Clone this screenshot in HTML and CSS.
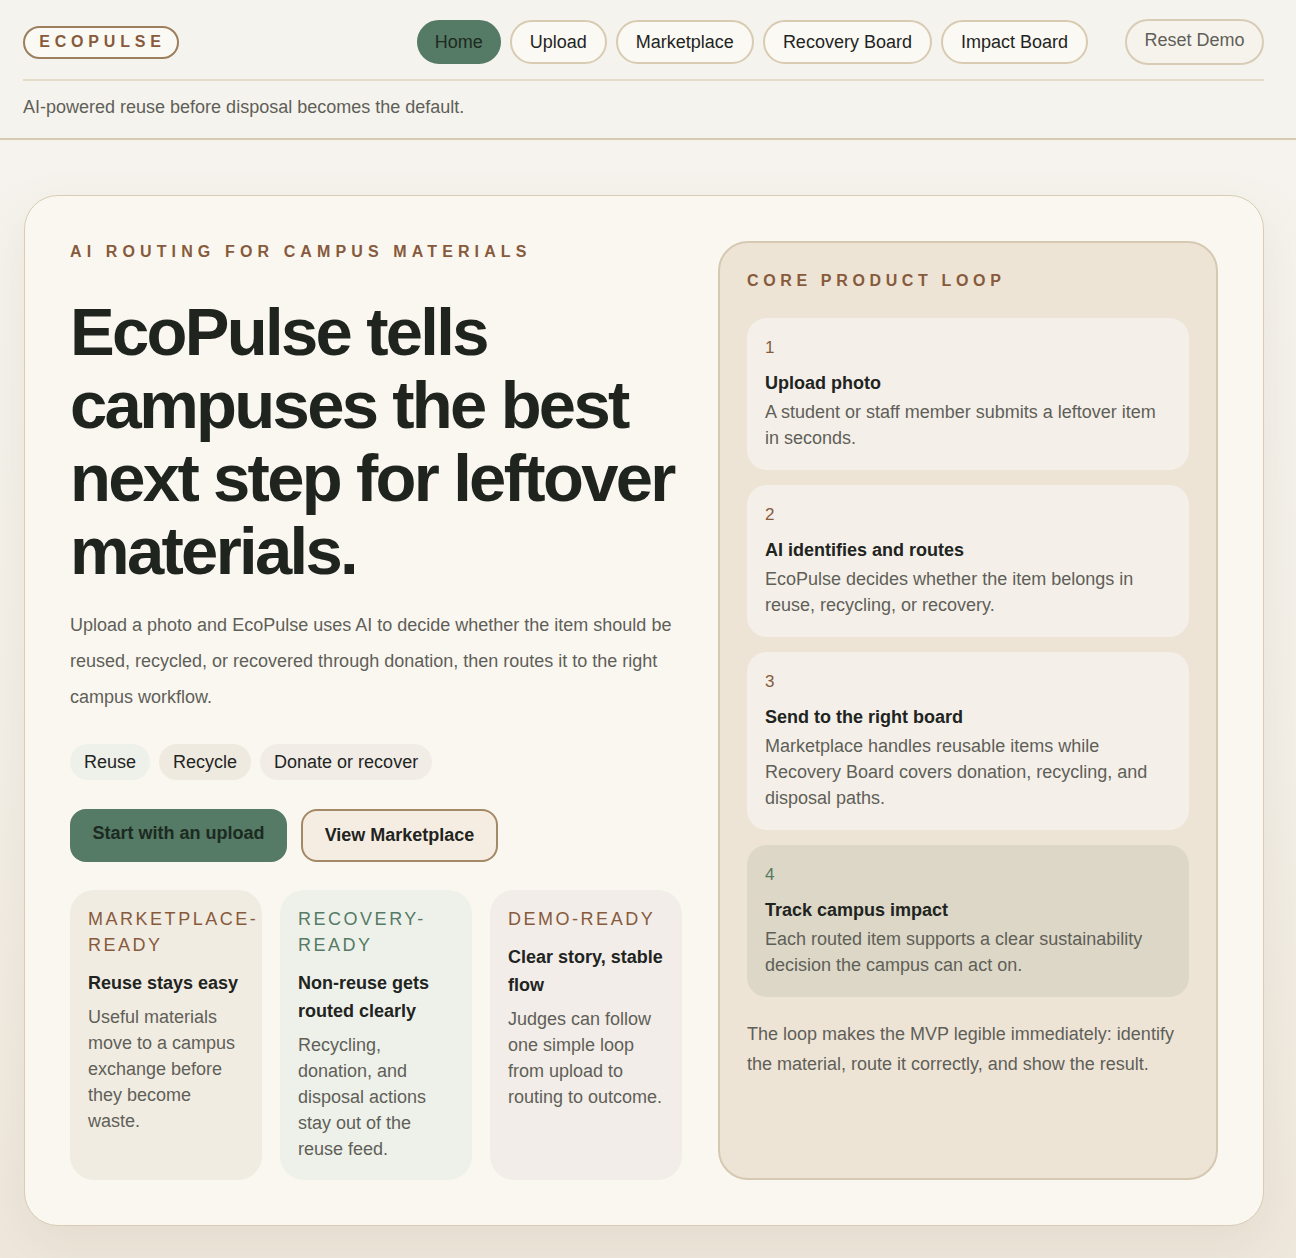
FILE: index.html
```html
<!DOCTYPE html>
<html lang="en">
<head>
<meta charset="utf-8">
<title>EcoPulse</title>
<link rel="stylesheet" href="styles.css">
</head>
<body>
<header class="topbar">
  <div class="topbar-row">
    <div class="logo">ECOPULSE</div>
    <nav class="nav">
      <a class="nav-btn active">Home</a>
      <a class="nav-btn">Upload</a>
      <a class="nav-btn">Marketplace</a>
      <a class="nav-btn">Recovery Board</a>
      <a class="nav-btn">Impact Board</a>
    </nav>
    <button class="reset-btn">Reset Demo</button>
  </div>
  <div class="divider"></div>
  <p class="tagline">AI-powered reuse before disposal becomes the default.</p>
</header>

<main class="page">
  <section class="hero">
    <div class="hero-main">
      <p class="eyebrow">AI ROUTING FOR CAMPUS MATERIALS</p>
      <h1 class="headline">EcoPulse tells campuses the best next step for leftover materials.</h1>
      <p class="lead">Upload a photo and EcoPulse uses AI to decide whether the item should be reused, recycled, or recovered through donation, then routes it to the right campus workflow.</p>
      <div class="chips">
        <span class="chip chip-reuse">Reuse</span>
        <span class="chip chip-recycle">Recycle</span>
        <span class="chip chip-donate">Donate or recover</span>
      </div>
      <div class="actions">
        <a class="btn btn-primary">Start with an upload</a>
        <a class="btn btn-secondary">View Marketplace</a>
      </div>
      <div class="features">
        <article class="feature feature-market">
          <p class="feature-label">MARKETPLACE-READY</p>
          <h3 class="feature-title">Reuse stays easy</h3>
          <p class="feature-body">Useful materials move to a campus exchange before they become waste.</p>
        </article>
        <article class="feature feature-recovery">
          <p class="feature-label">RECOVERY-READY</p>
          <h3 class="feature-title">Non-reuse gets routed clearly</h3>
          <p class="feature-body">Recycling, donation, and disposal actions stay out of the reuse feed.</p>
        </article>
        <article class="feature feature-demo">
          <p class="feature-label">DEMO-READY</p>
          <h3 class="feature-title">Clear story, stable flow</h3>
          <p class="feature-body">Judges can follow one simple loop from upload to routing to outcome.</p>
        </article>
      </div>
    </div>

    <aside class="loop">
      <p class="loop-title">CORE PRODUCT LOOP</p>
      <ol class="steps">
        <li class="step">
          <span class="step-num">1</span>
          <h4 class="step-title">Upload photo</h4>
          <p class="step-desc">A student or staff member submits a leftover item in seconds.</p>
        </li>
        <li class="step">
          <span class="step-num">2</span>
          <h4 class="step-title">AI identifies and routes</h4>
          <p class="step-desc">EcoPulse decides whether the item belongs in reuse, recycling, or recovery.</p>
        </li>
        <li class="step">
          <span class="step-num">3</span>
          <h4 class="step-title">Send to the right board</h4>
          <p class="step-desc">Marketplace handles reusable items while Recovery Board covers donation, recycling, and disposal paths.</p>
        </li>
        <li class="step step-final">
          <span class="step-num">4</span>
          <h4 class="step-title">Track campus impact</h4>
          <p class="step-desc">Each routed item supports a clear sustainability decision the campus can act on.</p>
        </li>
      </ol>
      <p class="loop-note">The loop makes the MVP legible immediately: identify the material, route it correctly, and show the result.</p>
    </aside>
  </section>
</main>
</body>
</html>
```

FILE: styles.css
```css
* { box-sizing: border-box; }

html, body {
  margin: 0;
  padding: 0;
}

body {
  font-family: "Liberation Sans", Arial, Helvetica, sans-serif;
  color: #1f241f;
  background: linear-gradient(180deg, #f6f4ef 0%, #f3efe7 60%, #eee7dc 100%);
  min-height: 1258px;
}

/* ---------- header ---------- */
.topbar {
  background: #f5f3ee;
  padding: 19px 32px 20px 23px;
  border-bottom: 2px solid #d6cab2;
}

.topbar-row {
  display: flex;
  align-items: center;
  height: 46px;
}

.logo {
  display: inline-flex;
  align-items: center;
  justify-content: center;
  width: 156px;
  height: 33px;
  border: 2px solid #9c7f5d;
  border-radius: 17px;
  background: #fbf9f3;
  color: #875a3c;
  font-weight: 700;
  font-size: 16px;
  letter-spacing: 0.3em;
  padding-left: 3px;
}

.nav {
  display: flex;
  gap: 9px;
  margin-left: auto;
}

.nav-btn {
  display: inline-flex;
  align-items: center;
  height: 44px;
  padding: 0 18px;
  border: 2px solid #d8cbb2;
  border-radius: 22px;
  background: #fbf9f3;
  color: #1f241f;
  font-size: 18px;
}

.nav-btn.active {
  background: #557a65;
  border-color: #557a65;
  color: #1c2a21;
  padding: 0 16px;
}

.reset-btn {
  margin-left: 37px;
  height: 46px;
  width: 139px;
  border: 2px solid #d8ccb6;
  border-radius: 23px;
  background: #f6f3ed;
  color: #5f5f58;
  font-family: inherit;
  font-size: 18px;
  padding: 0 0 3px;
}

.divider {
  margin-top: 14px;
  height: 2px;
  background: #e4dccb;
}

.tagline {
  margin: 16px 0 0;
  font-size: 18px;
  line-height: 21px;
  color: #5f5f58;
}

/* ---------- page ---------- */
.page {
  padding: 55px 32px 32px 24px;
}

.hero {
  display: grid;
  grid-template-columns: 612px minmax(0, 1fr);
  gap: 36px;
  padding: 45px;
  background: #faf7f1;
  border: 1px solid #d8ccb5;
  border-radius: 34px;
  box-shadow: 0 18px 50px rgba(140, 115, 80, 0.10);
}

.eyebrow {
  margin: 1px 0 0;
  font-size: 16px;
  line-height: 20px;
  font-weight: 700;
  letter-spacing: 0.32em;
  color: #875a3c;
}

.headline {
  margin: 33px 0 0;
  font-size: 67px;
  line-height: 73px;
  font-weight: 700;
  letter-spacing: -0.04em;
  color: #1f241f;
}

.lead {
  margin: 20px 0 0;
  font-size: 18px;
  line-height: 36px;
  color: #5f5f58;
}

.chips {
  display: flex;
  gap: 9px;
  margin-top: 29px;
}

.chip {
  display: inline-flex;
  align-items: center;
  height: 36px;
  padding: 0 14px;
  border-radius: 18px;
  font-size: 18px;
  color: #1f241f;
}

.chip-reuse { background: #eef1ea; }
.chip-recycle { background: #efeadf; }
.chip-donate { background: #f1ece6; }

.actions {
  display: flex;
  gap: 14px;
  margin-top: 29px;
}

.btn {
  display: inline-flex;
  align-items: center;
  justify-content: center;
  height: 53px;
  border-radius: 16px;
  font-size: 18px;
  font-weight: 700;
  color: #1f241f;
}

.btn-primary {
  width: 217px;
  background: #557a65;
  color: #1c2a21;
  padding-bottom: 4px;
}

.btn-secondary {
  width: 197px;
  background: #f5ede1;
  border: 2px solid #a38965;
}

.features {
  display: grid;
  grid-template-columns: repeat(3, minmax(0, 1fr));
  gap: 18px;
  margin-top: 28px;
}

.feature {
  border-radius: 24px;
  padding: 16px 18px 18px;
  min-width: 0;
}

.feature-market { background: #f1ece2; }
.feature-recovery { background: #eef1ea; }
.feature-demo { background: #f2ede8; }

.feature-label {
  margin: 0;
  font-size: 18px;
  line-height: 26px;
  letter-spacing: 0.14em;
  color: #875a3c;
  margin-right: -18px;
}

.feature-recovery .feature-label { color: #557a65; }

.feature-title {
  margin: 11px 0 0;
  font-size: 18px;
  line-height: 28px;
  font-weight: 700;
  color: #1f241f;
}

.feature-body {
  margin: 7px 0 0;
  font-size: 18px;
  line-height: 26px;
  color: #5f5f58;
}

/* ---------- loop panel ---------- */
.loop {
  background: #ede4d6;
  border: 2px solid #d6c9b1;
  border-radius: 30px;
  padding: 28px 27px 28px 27px;
}

.loop-title {
  margin: 0;
  font-size: 16px;
  line-height: 20px;
  font-weight: 700;
  letter-spacing: 0.29em;
  color: #875a3c;
}

.steps {
  list-style: none;
  margin: 27px 0 0;
  padding: 0;
  display: flex;
  flex-direction: column;
  gap: 15px;
}

.step {
  background: #f4f0e9;
  border-radius: 20px;
  padding: 19px 18px 19px;
}

.step-final { background: #dcd7c6; }

.step-num {
  display: block;
  font-size: 17px;
  line-height: 21px;
  color: #875a3c;
}

.step-final .step-num { color: #557a65; }

.step-title {
  margin: 13px 0 0;
  font-size: 18px;
  line-height: 24px;
  font-weight: 700;
  color: #1f241f;
}

.step-desc {
  margin: 4px 0 0;
  font-size: 18px;
  line-height: 26px;
  color: #5f5f58;
}

.loop-note {
  margin: 22px 0 0;
  font-size: 18px;
  line-height: 30px;
  color: #5f5f58;
}
```
